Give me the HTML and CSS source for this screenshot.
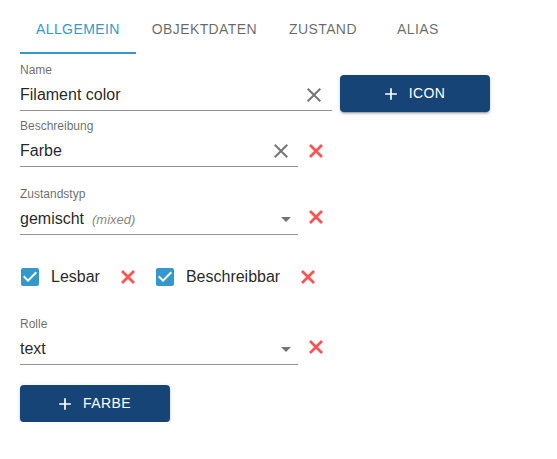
FILE: index.html
```html
<!DOCTYPE html>
<html>
<head>
<meta charset="utf-8">
<link rel="stylesheet" href="styles.css">
</head>
<body>
<div class="page">
  <div class="tabs">
    <div class="tab active">Allgemein</div>
    <div class="tab">Objektdaten</div>
    <div class="tab">Zustand</div>
    <div class="tab">Alias</div>
  </div>
  <div class="form">
    <div class="row">
      <div class="field w-name">
        <div class="label">Name</div>
        <div class="root">
          <span class="value">Filament color</span>
          <svg class="clear clear-name" viewBox="0 0 24 24"><path d="M19 6.41L17.59 5 12 10.59 6.41 5 5 6.41 10.59 12 5 17.59 6.41 19 12 13.41 17.59 19 19 17.59 13.41 12z"/></svg>
        </div>
      </div>
      <button class="btn btn-icon"><svg class="plus" viewBox="0 0 24 24"><path d="M19 13h-6v6h-2v-6H5v-2h6V5h2v6h6v2z"/></svg>Icon</button>
    </div>
    <div class="row bottom gap-8">
      <div class="field w-std">
        <div class="label">Beschreibung</div>
        <div class="root">
          <span class="value">Farbe</span>
          <svg class="clear" viewBox="0 0 24 24"><path d="M19 6.41L17.59 5 12 10.59 6.41 5 5 6.41 10.59 12 5 17.59 6.41 19 12 13.41 17.59 19 19 17.59 13.41 12z"/></svg>
        </div>
      </div>
      <span class="del"><svg viewBox="0 0 16 16"><path d="M2 2L14 14M14 2L2 14"/></svg></span>
    </div>
    <div class="row bottom gap-21">
      <div class="field w-std">
        <div class="label">Zustandstyp</div>
        <div class="root">
          <span class="value">gemischt<span class="hint">(mixed)</span></span>
          <svg class="arrow" viewBox="0 0 24 24"><path d="M7 10l5 5 5-5z"/></svg>
        </div>
      </div>
      <span class="del up"><svg viewBox="0 0 16 16"><path d="M2 2L14 14M14 2L2 14"/></svg></span>
    </div>
    <div class="row checks">
      <label class="check">
        <span class="cbox"><svg viewBox="0 0 24 24"><path d="M19 3H5c-1.11 0-2 .9-2 2v14c0 1.1.89 2 2 2h14c1.11 0 2-.9 2-2V5c0-1.1-.89-2-2-2zm-9 14l-5-5 1.410-1.41L10 14.17l7.59-7.59L19 8l-9 9z"/></svg></span>
        <span class="check-text">Lesbar</span>
      </label>
      <span class="del inline"><svg viewBox="0 0 16 16"><path d="M2 2L14 14M14 2L2 14"/></svg></span>
      <label class="check second">
        <span class="cbox"><svg viewBox="0 0 24 24"><path d="M19 3H5c-1.11 0-2 .9-2 2v14c0 1.1.89 2 2 2h14c1.11 0 2-.9 2-2V5c0-1.1-.89-2-2-2zm-9 14l-5-5 1.41-1.41L10 14.17l7.59-7.59L19 8l-9 9z"/></svg></span>
        <span class="check-text">Beschreibbar</span>
      </label>
      <span class="del inline"><svg viewBox="0 0 16 16"><path d="M2 2L14 14M14 2L2 14"/></svg></span>
    </div>
    <div class="row bottom gap-19">
      <div class="field w-std">
        <div class="label">Rolle</div>
        <div class="root">
          <span class="value">text</span>
          <svg class="arrow" viewBox="0 0 24 24"><path d="M7 10l5 5 5-5z"/></svg>
        </div>
      </div>
      <span class="del up"><svg viewBox="0 0 16 16"><path d="M2 2L14 14M14 2L2 14"/></svg></span>
    </div>
    <div class="row gap-20">
      <button class="btn"><svg class="plus" viewBox="0 0 24 24"><path d="M19 13h-6v6h-2v-6H5v-2h6V5h2v6h6v2z"/></svg>Farbe</button>
    </div>
  </div>
</div>
</body>
</html>
```
FILE: styles.css
```css
html, body {
  margin: 0;
  padding: 0;
  background: #fff;
}
body {
  font-family: "Liberation Sans", Arial, sans-serif;
  color: rgba(0, 0, 0, 0.87);
}
.page {
  padding-left: 20px;
}
.tabs {
  display: flex;
  margin-top: 6px;
  height: 48px;
}
.tab {
  box-sizing: border-box;
  min-width: 90px;
  height: 48px;
  padding: 12px 16px;
  display: flex;
  align-items: center;
  justify-content: center;
  font-size: 14px;
  font-weight: 400;
  line-height: 1.25;
  letter-spacing: 0.02857em;
  text-transform: uppercase;
  color: rgba(0, 0, 0, 0.6);
}
.tab.active {
  color: #3399cc;
  box-shadow: inset 0 -2px 0 #3399cc;
}
.form {
  padding-top: 9px;
  display: flex;
  flex-direction: column;
}
.row {
  display: flex;
  align-items: flex-start;
}
.row.bottom {
  align-items: flex-end;
}
.gap-8 { margin-top: 7px; }
.gap-21 { margin-top: 20px; }
.gap-19 { margin-top: 19px; }
.gap-20 { margin-top: 20px; }
.field {
  display: flex;
  flex-direction: column;
}
.w-name { width: 312px; }
.w-std { width: 278px; }
.label {
  font-size: 12px;
  line-height: 14px;
  margin-bottom: 2px;
  color: rgba(0, 0, 0, 0.6);
  white-space: nowrap;
}
.root {
  box-sizing: border-box;
  height: 32px;
  padding: 4px 0;
  border-bottom: 1px solid rgba(0, 0, 0, 0.42);
  display: flex;
  align-items: center;
}
.value {
  flex: 1;
  font-size: 16px;
  line-height: 23px;
  white-space: nowrap;
}
.hint {
  margin-left: 8px;
  font-size: 13px;
  font-style: italic;
  color: rgba(0, 0, 0, 0.5);
}
.clear {
  width: 24px;
  height: 24px;
  fill: rgba(0, 0, 0, 0.54);
  margin-right: 5px;
  flex: none;
}
.clear-name {
  margin-right: 6px;
}
.arrow {
  width: 24px;
  height: 24px;
  fill: rgba(0, 0, 0, 0.54);
  flex: none;
}
.del {
  width: 16px;
  height: 32px;
  margin-left: 10px;
  display: flex;
  align-items: center;
  justify-content: center;
  flex: none;
}
.del.up {
  padding-bottom: 4px;
  box-sizing: border-box;
}
.del svg {
  width: 16px;
  height: 16px;
  stroke: #ff5252;
  stroke-width: 2.8;
  fill: none;
}
.del.inline {
  margin-left: 20px;
  height: 42px;
}
.checks {
  margin-top: 21px;
  height: 42px;
  align-items: center;
}
.check {
  display: flex;
  align-items: center;
  margin-left: -11px;
  font-size: 16px;
  line-height: 1.5;
}
.check.second {
  margin-left: 8px;
}
.cbox {
  padding: 9px;
  display: flex;
}
.cbox svg {
  width: 24px;
  height: 24px;
  fill: #3399cc;
}
.check-text {
  white-space: nowrap;
}
.btn {
  box-sizing: border-box;
  width: 150px;
  height: 37px;
  padding: 6px 16px;
  border: none;
  border-radius: 4px;
  background: #164477;
  color: #fff;
  font-family: "Liberation Sans", Arial, sans-serif;
  font-size: 14px;
  font-weight: 500;
  letter-spacing: 0.02857em;
  text-transform: uppercase;
  line-height: 1.75;
  display: flex;
  align-items: center;
  justify-content: center;
  box-shadow: 0 3px 1px -2px rgba(0, 0, 0, 0.2), 0 2px 2px 0 rgba(0, 0, 0, 0.14), 0 1px 5px 0 rgba(0, 0, 0, 0.12);
}
.btn-icon {
  margin-left: 8px;
  margin-top: 12px;
}
.plus {
  width: 20px;
  height: 20px;
  fill: #fff;
  margin-left: -4px;
  margin-right: 8px;
}
```
